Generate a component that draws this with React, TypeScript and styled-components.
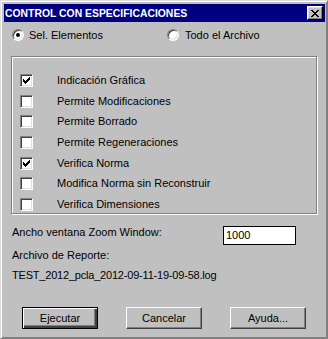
import React from 'react';
import styled, {createGlobalStyle} from 'styled-components';

const GlobalStyle = createGlobalStyle`
    html, body {
        margin: 0;
        padding: 0;
        background: #c0c0c0;
    }
    * {
        box-sizing: border-box;
    }
`

const Window = styled.div`
    width: 328px;
    height: 339px;
    display: flex;
    flex-direction: column;
    background: #c0c0c0;
    border: 1px solid;
    border-color: #dfdfdf #808080 #808080 #dfdfdf;
    box-shadow: inset 1px 1px #fff, inset -1px -1px #808080;
    padding: 3px 2px 1px 3px;
    font-family: "Liberation Sans", Arial, sans-serif;
    font-size: 11px;
    color: #000;
`

const TitleBar = styled.div`
    height: 18px;
    display: flex;
    align-items: center;
    justify-content: space-between;
    padding: 0 2px 0 1px;
    background: #000080;
    color: #fff;
    font-weight: bold;
    font-size: 10.4px;
`

const CloseButton = styled.button`
    width: 16px;
    height: 14px;
    padding: 0;
    display: flex;
    align-items: center;
    justify-content: center;
    background: #c0c0c0;
    border: 1px solid;
    border-color: #fff #000 #000 #fff;
    box-shadow: inset -1px -1px #808080, inset 1px 1px #dfdfdf;
`

const Body = styled.div`
    flex: 1;
    display: flex;
    flex-direction: column;
    padding: 0 8px 0 7px;
`

const RadioRow = styled.div`
    margin-top: 6px;
    height: 14px;
    display: grid;
    grid-template-columns: 155px 1fr;
    padding-left: 1px;
`

const Option = styled.label<{$gap: number}>`
    display: flex;
    align-items: center;
    gap: ${({$gap}) => $gap}px;
    line-height: 13px;
`

const RadioDot = styled.span<{$on: boolean}>`
    width: 12px;
    height: 12px;
    border-radius: 50%;
    border: 1px solid;
    border-color: #808080 #fff #fff #808080;
    box-shadow: inset 1px 1px #404040, inset -1px -1px #dfdfdf;
    background: #fff;
    display: flex;
    align-items: center;
    justify-content: center;

    &::after {
        content: '';
        width: 4px;
        height: 4px;
        border-radius: 50%;
        background: #000;
        display: ${({$on}) => ($on ? 'block' : 'none')};
    }
`

const GroupBox = styled.div`
    margin-top: 14px;
    display: flex;
    flex-direction: column;
    gap: 7.67px;
    padding: 17px 0 2px 8px;
    border: 1px solid #808080;
    box-shadow: inset 1px 1px #fff, 1px 1px #fff;
`

const CheckRow = styled.label`
    height: 13px;
    display: flex;
    align-items: center;
    gap: 24px;
    line-height: 13px;
`

const CheckBox = styled.span`
    width: 13px;
    height: 13px;
    flex: none;
    border: 1px solid;
    border-color: #808080 #fff #fff #808080;
    box-shadow: inset 1px 1px #404040, inset -1px -1px #dfdfdf;
    background: #fff;
    display: flex;
    align-items: center;
    justify-content: center;
`

const FieldRow = styled.div`
    margin-top: 12px;
    display: flex;
    align-items: flex-start;
    padding-left: 1px;
`

const Label = styled.div`
    flex: 1;
    line-height: 13px;
`

const NumberInput = styled.input`
    width: 73px;
    height: 19px;
    margin-right: 21px;
    padding: 0 2px;
    border: 1px solid #000;
    background: #fff;
    font-family: inherit;
    font-size: 11px;
    color: #000;
    outline: none;
`

const TextLine = styled.div<{$top: number; $tight?: boolean}>`
    margin-top: ${({$top}) => $top}px;
    padding-left: 1px;
    line-height: 13px;
    letter-spacing: ${({$tight}) => ($tight ? '-0.2px' : 'normal')};
`

const ButtonBar = styled.div`
    margin-top: 25px;
    display: flex;
    justify-content: center;
    gap: 28px;
`

const Button = styled.button<{$default?: boolean}>`
    width: 76px;
    height: 22px;
    padding: 0;
    background: #c0c0c0;
    font-family: "Liberation Sans", Arial, sans-serif;
    font-size: 11px;
    color: #000;
    border: 1px solid;
    border-color: ${({$default}) => ($default ? '#000' : '#fff #404040 #404040 #fff')};
    box-shadow: ${({$default}) => ($default
            ? 'inset 1px 1px #fff, inset -2px -2px #404040, inset -3px -3px #808080'
            : 'inset -1px -1px #808080')};
`

const CHECKS = [
    {label: 'Indicación Gráfica', on: true},
    {label: 'Permite Modificaciones', on: false},
    {label: 'Permite Borrado', on: false},
    {label: 'Permite Regeneraciones', on: false},
    {label: 'Verifica Norma', on: true},
    {label: 'Modifica Norma sin Reconstruir', on: false},
    {label: 'Verifica Dimensiones', on: false},
];

// pixel patterns, one column of 3px per step
const CheckMark = () => (
    <svg width="7" height="7" viewBox="0 0 7 7" shapeRendering="crispEdges">
        {[2, 3, 4, 3, 2, 1, 0].map((y, x) => (
            <rect key={x} x={x} y={y} width="1" height="3" fill="#000"/>
        ))}
    </svg>
);

const CloseGlyph = () => (
    <svg width="8" height="7" viewBox="0 0 8 7" shapeRendering="crispEdges">
        {[0, 1, 2, 3, 4, 5, 6].map(y => {
            const a = y <= 3 ? y : 6 - y;
            return (
                <g key={y}>
                    <rect x={a} y={y} width="2" height="1" fill="#000"/>
                    <rect x={6 - a} y={y} width="2" height="1" fill="#000"/>
                </g>
            );
        })}
    </svg>
);

const App: React.FC = () => {
    return (
        <>
            <GlobalStyle/>
            <Window>
                <TitleBar>
                    <span>CONTROL CON ESPECIFICACIONES</span>
                    <CloseButton aria-label="Cerrar"><CloseGlyph/></CloseButton>
                </TitleBar>
                <Body>
                    <RadioRow>
                        <Option $gap={5}><RadioDot $on={true}/>Sel. Elementos</Option>
                        <Option $gap={6}><RadioDot $on={false}/>Todo el Archivo</Option>
                    </RadioRow>
                    <GroupBox>
                        {CHECKS.map(c => (
                            <CheckRow key={c.label}>
                                <CheckBox>{c.on && <CheckMark/>}</CheckBox>
                                {c.label}
                            </CheckRow>
                        ))}
                    </GroupBox>
                    <FieldRow>
                        <Label>Ancho ventana Zoom Window:</Label>
                        <NumberInput defaultValue="1000"/>
                    </FieldRow>
                    <TextLine $top={4}>Archivo de Reporte:</TextLine>
                    <TextLine $top={7} $tight>TEST_2012_pcla_2012-09-11-19-09-58.log</TextLine>
                    <ButtonBar>
                        <Button $default>Ejecutar</Button>
                        <Button>Cancelar</Button>
                        <Button>Ayuda...</Button>
                    </ButtonBar>
                </Body>
            </Window>
        </>
    );
};

export default App;
